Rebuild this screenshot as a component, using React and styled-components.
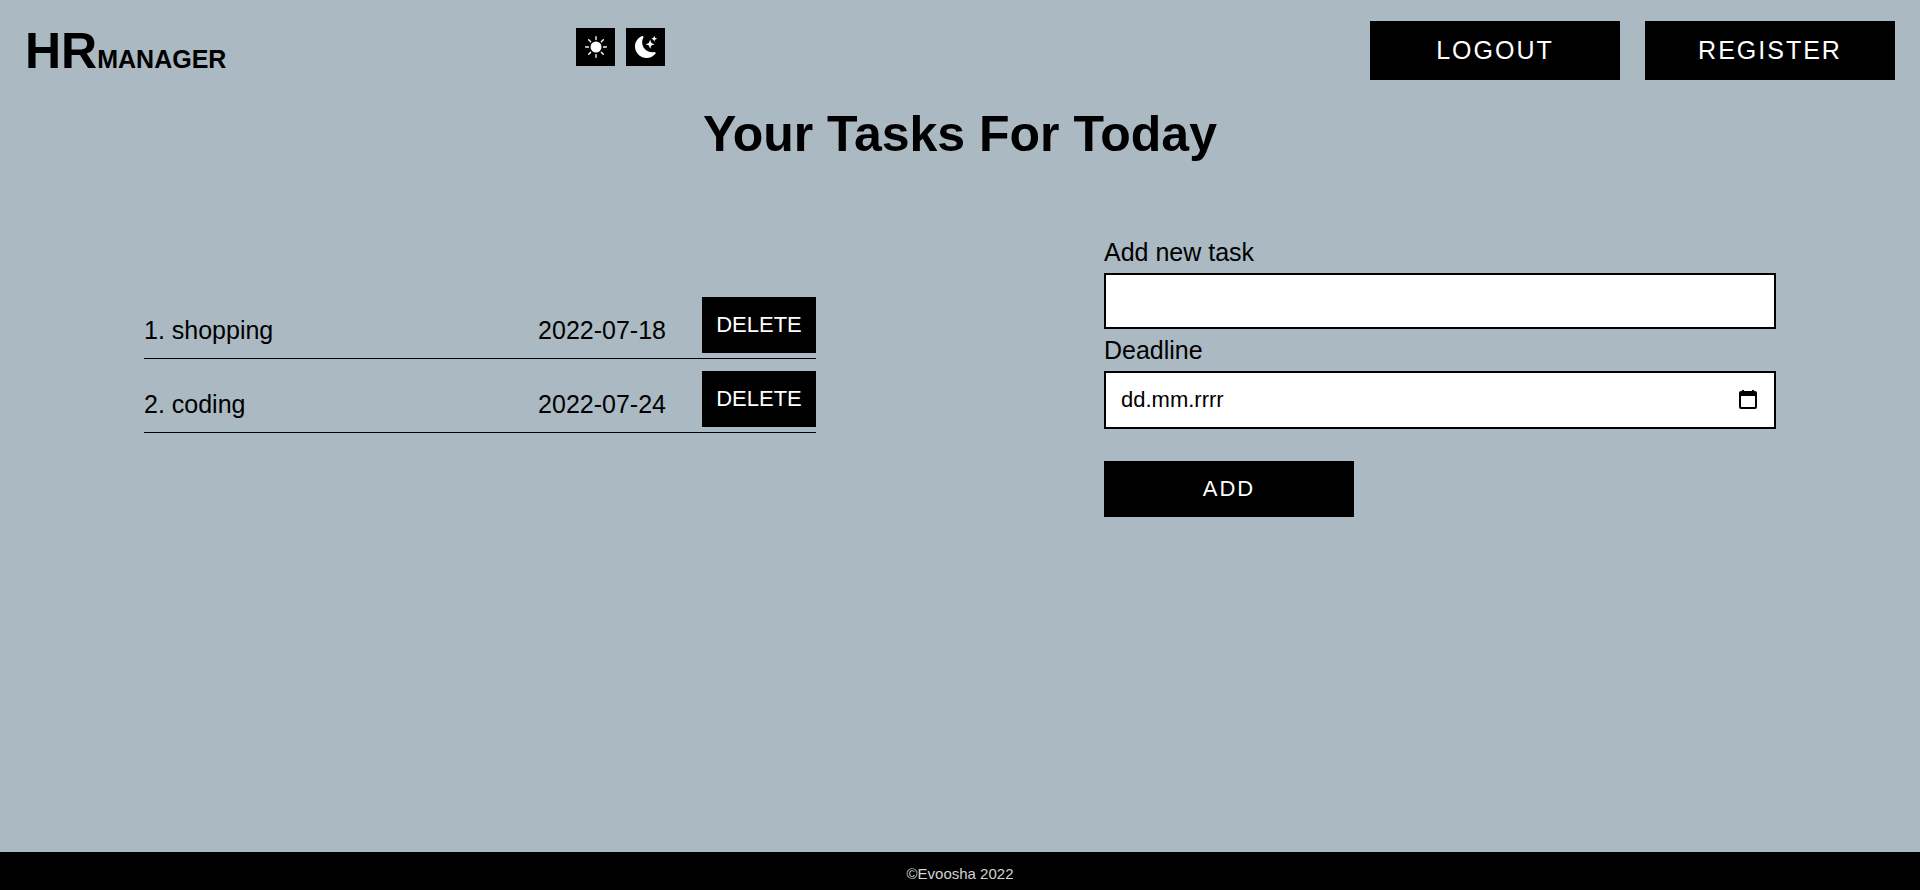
import React from "react";
import styled, { createGlobalStyle } from "styled-components";
import { BsSunFill, BsMoonStarsFill } from "react-icons/bs";

const GlobalStyle = createGlobalStyle`
  * { box-sizing: border-box; }
  body {
    margin: 0;
    background: #aab9c2;
    color: #000;
    font-family: "Liberation Sans", Arial, sans-serif;
    font-size: 25px;
    line-height: 29px;
  }
`;

const Page = styled.div`
  display: flex;
  flex-direction: column;
  min-height: 100vh;
`;

const Header = styled.header`
  display: grid;
  grid-template-columns: 30% 1fr auto;
  align-items: start;
  padding: 21px 0;
`;

const Logo = styled.a`
  padding: 1px 0 0 25px;
  color: inherit;
  font-size: 50px;
  font-weight: bold;
  line-height: 59px;
  text-decoration: none;
`;

const LogoSmall = styled.span`
  font-size: 25px;
  line-height: 29px;
`;

const ThemeSwitch = styled.div`
  display: flex;
  gap: 11px;
  padding-top: 7px;
`;

const Button = styled.button`
  display: flex;
  align-items: center;
  justify-content: center;
  border: 0;
  padding: 0;
  background: #000;
  color: #fff;
  font-family: inherit;
  cursor: pointer;
`;

const ThemeButton = styled(Button)`
  width: 39px;
  height: 38px;
  font-size: 22px;
`;

const WideButton = styled(Button)`
  width: 250px;
  height: ${({ $large }) => ($large ? 59 : 56)}px;
  font-size: ${({ $large }) => ($large ? 25 : 22)}px;
  letter-spacing: 2px;
`;

const DeleteButton = styled(Button)`
  width: 114px;
  height: 56px;
  font-size: 22px;
`;

const Nav = styled.nav`
  display: flex;
  gap: 25px;
  padding-right: 25px;
`;

const Main = styled.main`
  flex: 1;
`;

const Title = styled.h1`
  margin: 3px 0 0;
  font-size: 50px;
  line-height: 59px;
  text-align: center;
`;

const Columns = styled.div`
  display: grid;
  grid-template-columns: 1fr 1fr;
  align-items: start;
  padding-top: 74px;
`;

const TaskList = styled.ul`
  width: 70%;
  margin: 59px auto 0;
  padding: 0;
  list-style: none;
`;

const Task = styled.li`
  display: flex;
  align-items: flex-end;
  margin-bottom: 12px;
  padding-bottom: 5px;
  border-bottom: 1px solid #000;
`;

const TaskName = styled.span`
  flex: 1;
  padding-bottom: 8px;
`;

const TaskDate = styled.time`
  padding: 0 36px 8px 0;
`;

const Form = styled.form`
  display: flex;
  flex-direction: column;
  align-items: flex-start;
  width: 70%;
  margin: 0 auto;
`;

const Label = styled.label`
  margin-bottom: 6px;
`;

const Field = styled.div`
  display: flex;
  align-items: center;
  width: 100%;
  height: ${({ $tall }) => ($tall ? 58 : 56)}px;
  margin-bottom: ${({ $tall }) => ($tall ? 32 : 7)}px;
  padding: 0 15px;
  border: 2px solid #000;
  background: #fff;
`;

const Input = styled.input`
  flex: 1;
  min-width: 0;
  border: 0;
  padding: 0;
  outline: 0;
  background: transparent;
  color: #000;
  font-family: inherit;
  font-size: 22px;

  &::placeholder {
    color: #000;
    opacity: 1;
  }
`;

const CalendarButton = styled(Button)`
  background: transparent;
  color: #000;
`;

const Footer = styled.footer`
  padding: 13px 0 8px;
  background: #000;
  color: #d3d3d3;
  font-size: 15px;
  line-height: 17px;
  text-align: center;
`;

const CalendarIcon = () => (
  <svg width="22" height="22" viewBox="0 0 22 22" aria-hidden="true">
    <path
      fill="currentColor"
      fillRule="evenodd"
      d="M5 1h2v1h8V1h2v1h1a2 2 0 0 1 2 2v14a2 2 0 0 1-2 2H4a2 2 0 0 1-2-2V4a2 2 0 0 1 2-2h1zM4 7v11h14V7z"
    />
  </svg>
);

const tasks = [
  { name: "shopping", date: "2022-07-18" },
  { name: "coding", date: "2022-07-24" },
];

export default function App() {
  return (
    <Page>
      <GlobalStyle />
      <Header>
        <Logo href="#">
          HR<LogoSmall>MANAGER</LogoSmall>
        </Logo>
        <ThemeSwitch>
          <ThemeButton type="button" aria-label="Light theme">
            <BsSunFill />
          </ThemeButton>
          <ThemeButton type="button" aria-label="Dark theme">
            <BsMoonStarsFill />
          </ThemeButton>
        </ThemeSwitch>
        <Nav>
          <WideButton type="button" $large>LOGOUT</WideButton>
          <WideButton type="button" $large>REGISTER</WideButton>
        </Nav>
      </Header>
      <Main>
        <Title>Your Tasks For Today</Title>
        <Columns>
          <TaskList>
            {tasks.map((task, index) => (
              <Task key={task.name}>
                <TaskName>{`${index + 1}. ${task.name}`}</TaskName>
                <TaskDate dateTime={task.date}>{task.date}</TaskDate>
                <DeleteButton type="button">DELETE</DeleteButton>
              </Task>
            ))}
          </TaskList>
          <Form onSubmit={(event) => event.preventDefault()}>
            <Label htmlFor="task">Add new task</Label>
            <Field>
              <Input id="task" type="text" />
            </Field>
            <Label htmlFor="deadline">Deadline</Label>
            <Field $tall>
              <Input id="deadline" type="text" placeholder="dd.mm.rrrr" />
              <CalendarButton type="button" aria-label="Choose a date">
                <CalendarIcon />
              </CalendarButton>
            </Field>
            <WideButton type="submit">ADD</WideButton>
          </Form>
        </Columns>
      </Main>
      <Footer>©Evoosha 2022</Footer>
    </Page>
  );
}
